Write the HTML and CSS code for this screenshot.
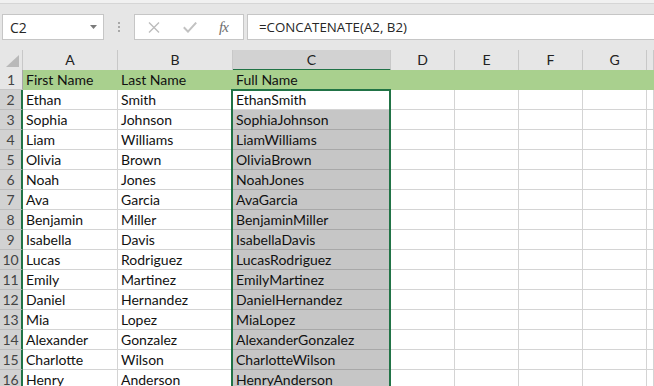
FILE: index.html
```html
<!DOCTYPE html>
<html>
<head>
<meta charset="utf-8">
<link rel="stylesheet" href="styles.css">
</head>
<body>
<div class="app">
  <div class="edge"></div>
  <div class="fbar">
    <div class="namebox">
      <span class="ref">C2</span>
      <svg class="dd" width="7" height="4" viewBox="0 0 7 4"><path d="M0 0H7L3.5 4Z" fill="#7a7a7a"/></svg>
    </div>
    <div class="grip"><i></i><i></i><i></i></div>
    <div class="btns">
      <svg class="ico" width="12" height="11" viewBox="0 0 12 11"><path d="M1 0.5L11 10.5M11 0.5L1 10.5" stroke="#bcbcbc" stroke-width="1.4" fill="none"/></svg>
      <svg class="ico" width="14" height="11" viewBox="0 0 14 11"><path d="M0.8 5.2L5 9.6L13.2 0.6" stroke="#c2c2c2" stroke-width="2" fill="none"/></svg>
      <span class="fx">fx</span>
    </div>
    <div class="formula">=CONCATENATE(A2, B2)</div>
  </div>
  <div class="sheet">
    <div class="row head">
      <div class="corner"><svg width="13" height="12" viewBox="0 0 13 12"><path d="M13 0V12H0Z" fill="#b9b9b9"/></svg></div>
      <div class="ch">A</div><div class="ch">B</div><div class="ch on">C</div><div class="ch">D</div><div class="ch">E</div><div class="ch">F</div><div class="ch">G</div><div class="ch"></div>
    </div>
    <div class="row r1">
      <div class="rh">1</div>
      <div class="c">First Name</div><div class="c">Last Name</div><div class="c">Full Name</div><div class="c"></div><div class="c"></div><div class="c"></div><div class="c"></div><div class="c"></div>
    </div>
    <div class="row">
      <div class="rh">2</div><div class="c">Ethan</div><div class="c">Smith</div><div class="c act">EthanSmith</div><div class="c"></div><div class="c"></div><div class="c"></div><div class="c"></div><div class="c"></div>
    </div>
    <div class="row">
      <div class="rh">3</div><div class="c">Sophia</div><div class="c">Johnson</div><div class="c s">SophiaJohnson</div><div class="c"></div><div class="c"></div><div class="c"></div><div class="c"></div><div class="c"></div>
    </div>
    <div class="row">
      <div class="rh">4</div><div class="c">Liam</div><div class="c">Williams</div><div class="c s">LiamWilliams</div><div class="c"></div><div class="c"></div><div class="c"></div><div class="c"></div><div class="c"></div>
    </div>
    <div class="row">
      <div class="rh">5</div><div class="c">Olivia</div><div class="c">Brown</div><div class="c s">OliviaBrown</div><div class="c"></div><div class="c"></div><div class="c"></div><div class="c"></div><div class="c"></div>
    </div>
    <div class="row">
      <div class="rh">6</div><div class="c">Noah</div><div class="c">Jones</div><div class="c s">NoahJones</div><div class="c"></div><div class="c"></div><div class="c"></div><div class="c"></div><div class="c"></div>
    </div>
    <div class="row">
      <div class="rh">7</div><div class="c">Ava</div><div class="c">Garcia</div><div class="c s">AvaGarcia</div><div class="c"></div><div class="c"></div><div class="c"></div><div class="c"></div><div class="c"></div>
    </div>
    <div class="row">
      <div class="rh">8</div><div class="c">Benjamin</div><div class="c">Miller</div><div class="c s">BenjaminMiller</div><div class="c"></div><div class="c"></div><div class="c"></div><div class="c"></div><div class="c"></div>
    </div>
    <div class="row">
      <div class="rh">9</div><div class="c">Isabella</div><div class="c">Davis</div><div class="c s">IsabellaDavis</div><div class="c"></div><div class="c"></div><div class="c"></div><div class="c"></div><div class="c"></div>
    </div>
    <div class="row">
      <div class="rh">10</div><div class="c">Lucas</div><div class="c">Rodriguez</div><div class="c s">LucasRodriguez</div><div class="c"></div><div class="c"></div><div class="c"></div><div class="c"></div><div class="c"></div>
    </div>
    <div class="row">
      <div class="rh">11</div><div class="c">Emily</div><div class="c">Martinez</div><div class="c s">EmilyMartinez</div><div class="c"></div><div class="c"></div><div class="c"></div><div class="c"></div><div class="c"></div>
    </div>
    <div class="row">
      <div class="rh">12</div><div class="c">Daniel</div><div class="c">Hernandez</div><div class="c s">DanielHernandez</div><div class="c"></div><div class="c"></div><div class="c"></div><div class="c"></div><div class="c"></div>
    </div>
    <div class="row">
      <div class="rh">13</div><div class="c">Mia</div><div class="c">Lopez</div><div class="c s">MiaLopez</div><div class="c"></div><div class="c"></div><div class="c"></div><div class="c"></div><div class="c"></div>
    </div>
    <div class="row">
      <div class="rh">14</div><div class="c">Alexander</div><div class="c">Gonzalez</div><div class="c s">AlexanderGonzalez</div><div class="c"></div><div class="c"></div><div class="c"></div><div class="c"></div><div class="c"></div>
    </div>
    <div class="row">
      <div class="rh">15</div><div class="c">Charlotte</div><div class="c">Wilson</div><div class="c s">CharlotteWilson</div><div class="c"></div><div class="c"></div><div class="c"></div><div class="c"></div><div class="c"></div>
    </div>
    <div class="row">
      <div class="rh">16</div><div class="c">Henry</div><div class="c">Anderson</div><div class="c s">HenryAnderson</div><div class="c"></div><div class="c"></div><div class="c"></div><div class="c"></div><div class="c"></div>
    </div>
    <div class="selbox"></div>
  </div>
</div>
</body>
</html>
```

FILE: styles.css
```css
* { box-sizing: border-box; }
html, body { margin: 0; padding: 0; }
body { background: #e6e6e6; overflow: hidden; }
.app { width: 654px; height: 386px; overflow: hidden; background: #e6e6e6; font-family: "Open Sans", "Noto Sans", sans-serif; }
.edge { height: 4px; background: #f1f1f1; border-bottom: 1px solid #d6d6d6; }
.fbar { display: flex; align-items: stretch; height: 46px; padding: 10px 0 10px 2px; }
.namebox { width: 102px; background: #fff; border: 1px solid #c6c6c6; display: flex; align-items: center; justify-content: space-between; padding: 0 6px 0 7px; font-size: 14px; color: #262626; }
.namebox .ref { margin-top: 1px; }
.dd { margin-top: -1px; }
.grip { width: 30px; display: flex; flex-direction: column; align-items: center; justify-content: center; gap: 2px; }
.grip i { display: block; width: 2px; height: 2px; background: #a8a8a8; }
.btns { width: 110px; background: #fff; border: 1px solid #c6c6c6; display: flex; align-items: center; padding: 0 0 0 13px; gap: 23px; }
.btns .ico { display: block; }
.fx { font-family: "Liberation Serif", serif; font-style: italic; font-size: 15px; color: #6e6e6e; letter-spacing: -1px; margin-left: -1px; }
.formula { flex: 1; margin-left: 3px; background: #fff; border: 1px solid #c6c6c6; border-right: none; display: flex; align-items: center; padding-left: 11px; font-size: 13.3px; color: #262626; white-space: nowrap; }
.sheet { position: relative; font-family: "Lato", "Open Sans", sans-serif; font-size: 14px; }
.row { display: grid; grid-template-columns: 23px 95px 115px 158px 64px 64px 64px 64px 7px; height: 20px; }
.head { height: 20px; }
.corner { background: #e6e6e6; border-right: 1px solid #c8c8c8; border-bottom: 1px solid #a6a6a6; display: flex; align-items: flex-end; justify-content: flex-end; padding: 0 3px 3px 0; }
.corner svg { display: block; }
.ch { background: #e6e6e6; border-right: 1px solid #c8c8c8; border-bottom: 1px solid #a6a6a6; text-align: center; line-height: 19px; color: #222; }
.ch.on { background: #d2d2d2; border-bottom: 2px solid #217346; }
.rh { background: #d2d2d2; border-right: 2px solid #217346; border-bottom: 1px solid #bdbdbd; text-align: center; line-height: 19px; color: #444; font-size: 14px; }
.r1 .rh { background: #e6e6e6; border-right: 1px solid #a6a6a6; border-bottom: 1px solid #c6c6c6; }
.c { background: #fff; border-right: 1px solid #d4d4d4; border-bottom: 1px solid #d4d4d4; padding: 0 3px; line-height: 19px; color: #111; white-space: nowrap; overflow: hidden; }
.r1 .c { background: #a9d08e; border-color: #a9d08e; }
.c.s { background: #c6c6c6; border-bottom-color: #a8a8a8; }
.selbox { position: absolute; left: 231px; top: 39px; width: 160px; height: 320px; border: 2px solid #217346; pointer-events: none; }
```
